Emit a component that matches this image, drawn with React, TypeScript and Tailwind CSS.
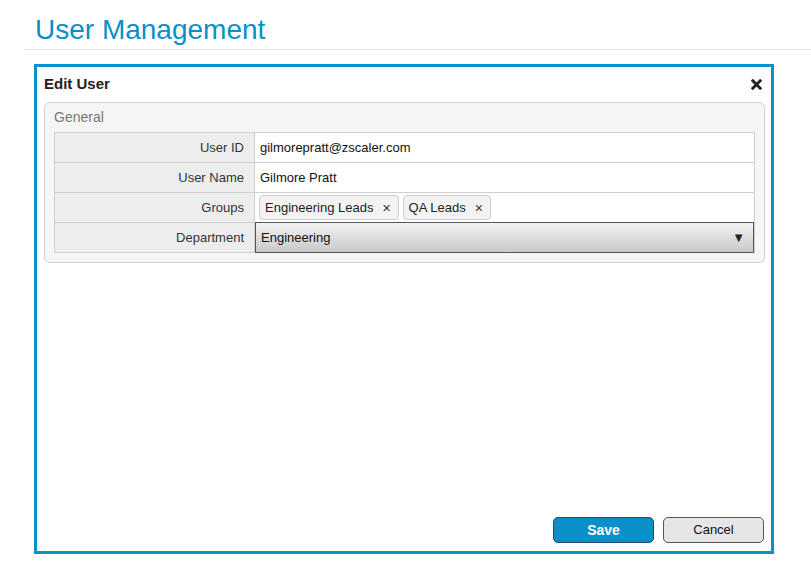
import React from "react";

const rows = [
  { label: "User ID" },
  { label: "User Name" },
  { label: "Groups" },
  { label: "Department" },
];

function Tag({ text }: { text: string }) {
  return (
    <span className="flex items-center h-[25px] pl-[5px] pr-[7px] gap-[9px] rounded-[4px] border border-[#cccccc] bg-[#f3f3f3] text-[13px] text-[#222]">
      <span>{text}</span>
      <span className="text-[14px] text-[#333] leading-none">×</span>
    </span>
  );
}

export default function App() {
  return (
    <div
      className="w-[811px] h-[582px] bg-white relative"
      style={{ fontFamily: '"Liberation Sans", Arial, sans-serif' }}
    >
      <div className="pl-[35px] pt-[13px] h-[49px]">
        <h1 className="text-[28px] leading-[34px] text-[#0a8fc8]">User Management</h1>
      </div>
      <div className="ml-[24px] h-px bg-[#e8e8e8]" />
      <div className="ml-[34px] mt-[14px] w-[740px] h-[490px] border-[3px] border-[#0a92c8] bg-white flex flex-col">
        <div className="flex items-center justify-between pl-[7px] pr-[9px] pt-[2px] h-[32px]">
          <span className="text-[15px] font-bold text-[#222]">Edit User</span>
          <svg width="11" height="11" viewBox="0 0 12 12">
            <path d="M2 2 L10 10 M10 2 L2 10" stroke="#222" strokeWidth="3.2" strokeLinecap="square" />
          </svg>
        </div>
        <div className="ml-[7px] mt-[3px] w-[721px] h-[161px] rounded-[6px] border border-[#d0d0d0] bg-[#f6f6f6] px-[9px]">
          <div className="h-[29px] pt-[6px] text-[14px] leading-[16px] text-[#777]">General</div>
          <div className="border border-[#cfcfcf] bg-white">
            {rows.map((r, i) => (
              <div key={r.label} className={`flex h-[29px] ${i > 0 ? "border-t border-[#cfcfcf] box-content" : ""}`}>
                <div className="w-[200px] shrink-0 bg-[#ededed] border-r border-[#cfcfcf] flex items-center justify-end pr-[10px] text-[13px] text-[#333]">
                  {r.label}
                </div>
                <div className="flex-1 flex items-center text-[13px] text-[#111]">
                  {i === 0 && <span className="pl-[5px]">gilmorepratt@zscaler.com</span>}
                  {i === 1 && <span className="pl-[5px]">Gilmore Pratt</span>}
                  {i === 2 && (
                    <div className="flex gap-[4px] pl-[4px]">
                      <Tag text="Engineering Leads" />
                      <Tag text="QA Leads" />
                    </div>
                  )}
                  {i === 3 && (
                    <div className="w-full flex items-center justify-between pl-[5px] pr-[8px] border border-[#555] bg-gradient-to-b from-[#f2f2f2] to-[#c9c9c9] mt-[-1px] mb-[-1px] h-[31px]">
                      <span>Engineering</span>
                      <span className="text-[13px] text-[#222]">▼</span>
                    </div>
                  )}
                </div>
              </div>
            ))}
          </div>
        </div>
        <div className="flex-1" />
        <div className="flex justify-end gap-[9px] pr-[7px] pb-[8px]">
          <button className="w-[101px] h-[26px] rounded-[5px] border border-[#2a4a60] bg-[#0a8fc8] text-white font-bold text-[14px]">
            Save
          </button>
          <button className="w-[101px] h-[26px] rounded-[5px] border border-[#555] bg-[#e6e6e6] text-[#111] text-[13px]">
            Cancel
          </button>
        </div>
      </div>
    </div>
  );
}
